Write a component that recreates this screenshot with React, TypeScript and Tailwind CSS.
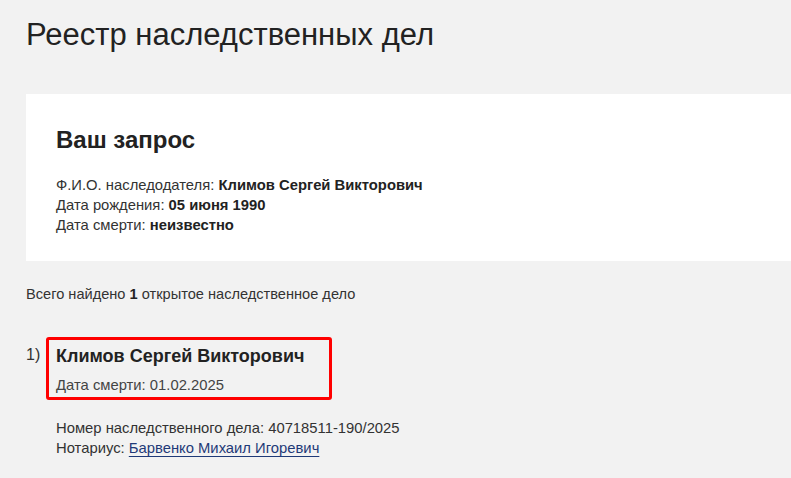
export default function App() {
  return (
    <div className="min-h-[478px] bg-[#f2f2f2] pl-[26px] pt-[15px] text-[#222] font-['Liberation_Sans',Arial,sans-serif]">
      <h1 className="text-[31px] leading-[40px]">Реестр наследственных дел</h1>

      <div className="mt-[39px] bg-white pl-[30px] pt-[31px] h-[167px]">
        <h2 className="text-[24px] leading-[30px] font-bold">Ваш запрос</h2>
        <div className="mt-[20px] text-[14.8px] leading-[20px] text-[#333]">
          <p>
            Ф.И.О. наследодателя: <b className="text-[#222]">Климов Сергей Викторович</b>
          </p>
          <p>
            Дата рождения: <b className="text-[#222]">05 июня 1990</b>
          </p>
          <p>
            Дата смерти: <b className="text-[#222]">неизвестно</b>
          </p>
        </div>
      </div>

      <p className="mt-[23px] text-[14.6px] leading-[20px] text-[#333]">
        Всего найдено <b className="text-[#222]">1</b> открытое наследственное дело
      </p>

      <div className="mt-[33px] flex">
        <span className="w-[20px] pt-[8px] text-[16px] leading-[20px] text-[#333]">1)</span>
        <div>
          <div className="w-[286px] h-[63px] rounded-[3px] border-[3px] border-[#f00] pl-[7px] pt-[4px]">
            <div className="text-[18px] leading-[24px] font-bold">Климов Сергей Викторович</div>
            <div className="mt-[7px] text-[14.8px] leading-[20px] text-[#444]">Дата смерти: 01.02.2025</div>
          </div>
          <div className="mt-[18px] pl-[10px] text-[14.8px] leading-[20px] text-[#333]">
            <p>Номер наследственного дела: 40718511-190/2025</p>
            <p>
              Нотариус:{' '}
              <a href="#" className="text-[#1f3a78] underline underline-offset-[3px] decoration-[#1f3a78]">
                Барвенко Михаил Игоревич
              </a>
            </p>
          </div>
        </div>
      </div>
    </div>
  );
}
